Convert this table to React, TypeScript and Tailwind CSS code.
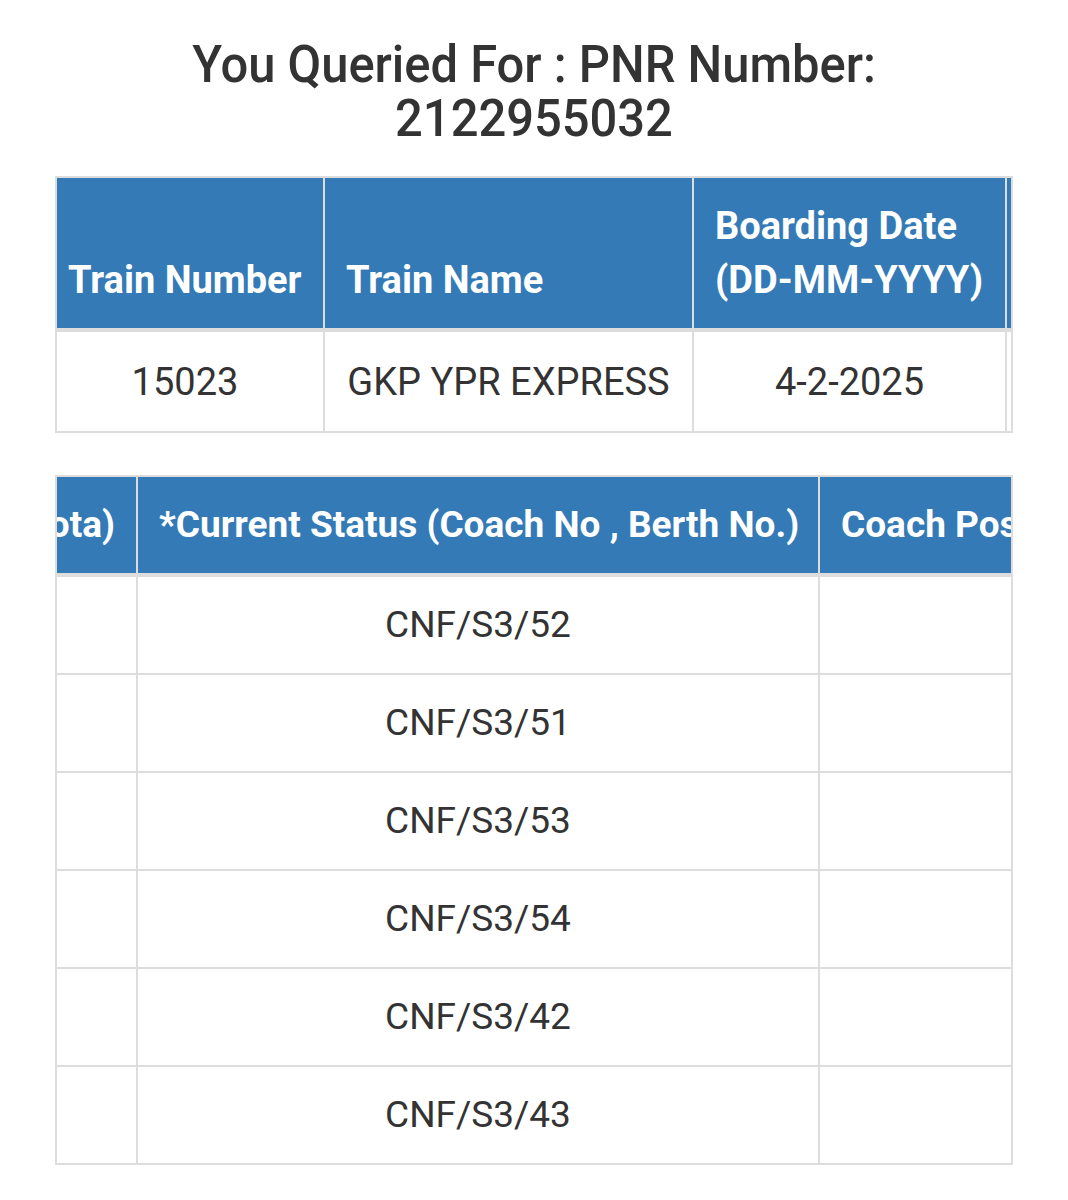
import React from "react";

const statuses = [
  "CNF/S3/52",
  "CNF/S3/51",
  "CNF/S3/53",
  "CNF/S3/54",
  "CNF/S3/42",
  "CNF/S3/43",
];

export default function App() {
  return (
    <div className="min-h-[1200px] bg-white font-['Roboto',sans-serif] text-[#333]">
      <h1 className="pt-[38px] text-center text-[52px] leading-[54px] font-medium scale-x-[0.94]">
        You Queried For : PNR Number:
        <br />
        2122955032
      </h1>

      {/* train details */}
      <div className="mt-[30px] ml-[55px] w-[958px] overflow-hidden border-2 border-[#ddd]">
        <table className="-ml-[10px] border-separate border-spacing-0 table-fixed w-[1400px]">
          <colgroup>
            <col className="w-[278px]" />
            <col className="w-[369px]" />
            <col className="w-[313px]" />
            <col className="w-[440px]" />
          </colgroup>
          <thead>
            <tr className="bg-[#337ab7] text-white">
              <th className="align-bottom text-left font-bold text-[38px] leading-[54px] p-[21px] border-r-2 border-b-4 border-[#ddd] whitespace-nowrap">
                Train Number
              </th>
              <th className="align-bottom text-left font-bold text-[38px] leading-[54px] p-[21px] border-r-2 border-b-4 border-[#ddd] whitespace-nowrap">
                Train Name
              </th>
              <th className="align-bottom text-left font-bold text-[38px] leading-[54px] p-[21px] border-r-2 border-b-4 border-[#ddd]">
                Boarding Date (DD-MM-YYYY)
              </th>
              <th className="align-bottom text-left font-bold text-[38px] leading-[54px] p-[21px] border-r-2 border-b-4 border-[#ddd] whitespace-nowrap">
                From
              </th>
            </tr>
          </thead>
          <tbody>
            <tr className="text-[38px] leading-[54px] text-center">
              <td className="px-[21px] pt-[23px] pb-[22px] border-r-2 border-[#ddd]">15023</td>
              <td className="px-[21px] pt-[23px] pb-[22px] border-r-2 border-[#ddd] whitespace-nowrap">GKP YPR EXPRESS</td>
              <td className="px-[21px] pt-[23px] pb-[22px] border-r-2 border-[#ddd]">4-2-2025</td>
              <td className="px-[21px] pt-[23px] pb-[22px] border-r-2 border-[#ddd]">GKP</td>
            </tr>
          </tbody>
        </table>
      </div>

      {/* passenger status */}
      <div className="mt-[42px] ml-[55px] w-[958px] overflow-hidden border-2 border-[#ddd]">
        <table className="border-separate border-spacing-0 table-fixed w-[1300px]">
          <colgroup>
            <col className="w-[81px]" />
            <col className="w-[682px]" />
            <col className="w-[537px]" />
          </colgroup>
          <thead>
            <tr className="bg-[#337ab7] text-white">
              <th className="p-0 border-r-2 border-b-4 border-[#ddd] font-bold text-[37px] leading-[54px]">
                <div className="flex justify-end overflow-hidden py-[21px] pr-[21px] whitespace-nowrap">
                  <span>Booking Status (Coach No , Berth No., Quota)</span>
                </div>
              </th>
              <th className="text-left font-bold text-[37px] leading-[54px] p-[21px] border-r-2 border-b-4 border-[#ddd] whitespace-nowrap">
                *Current Status (Coach No , Berth No.)
              </th>
              <th className="text-left font-bold text-[37px] leading-[54px] p-[21px] border-b-4 border-[#ddd] whitespace-nowrap">
                Coach Position
              </th>
            </tr>
          </thead>
          <tbody>
            {statuses.map((s, i) => (
              <tr key={i} className="text-[37px] leading-[54px] text-center">
                <td
                  className={`py-[21px] border-r-2 border-[#ddd] ${
                    i < statuses.length - 1 ? "border-b-2" : ""
                  }`}
                >
                  &nbsp;
                </td>
                <td
                  className={`px-[21px] py-[21px] border-r-2 border-[#ddd] ${
                    i < statuses.length - 1 ? "border-b-2" : ""
                  }`}
                >
                  {s}
                </td>
                <td
                  className={`px-[21px] py-[21px] border-[#ddd] ${
                    i < statuses.length - 1 ? "border-b-2" : ""
                  }`}
                >
                  &nbsp;
                </td>
              </tr>
            ))}
          </tbody>
        </table>
      </div>
    </div>
  );
}
